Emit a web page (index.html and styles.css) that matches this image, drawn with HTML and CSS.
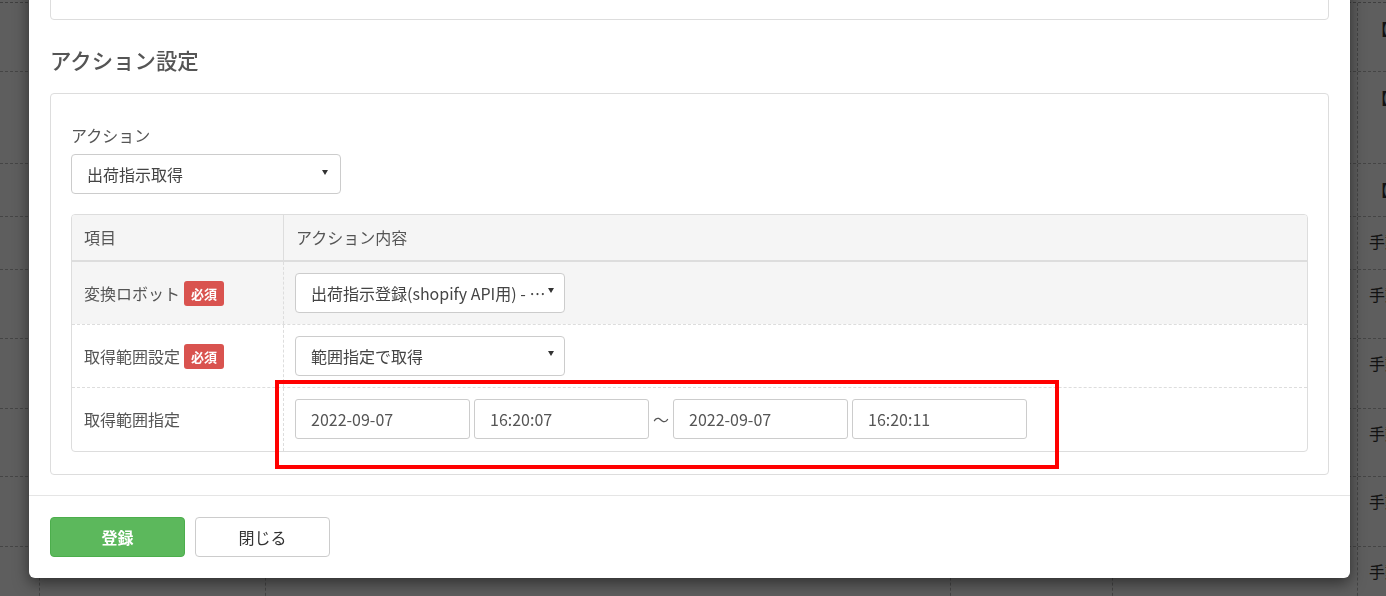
FILE: index.html
```html
<!DOCTYPE html>
<html lang="ja">
<head>
<meta charset="utf-8">
<title>アクション設定</title>
<link rel="stylesheet" href="styles.css">
</head>
<body>
<div class="page">
  <div class="bg-grid">
    <div class="bg-row r1"><span></span><span></span><span></span><span></span><span></span><span class="last">【定期】受注取込</span></div>
    <div class="bg-row r2"><span></span><span></span><span></span><span></span><span></span><span class="last">【定期】出荷指示</span></div>
    <div class="bg-row r3"><span></span><span></span><span></span><span></span><span></span><span class="last">【定期】在庫連携</span></div>
    <div class="bg-row r4"><span></span><span></span><span></span><span></span><span></span><span class="last">手動実行</span></div>
    <div class="bg-row r5"><span></span><span></span><span></span><span></span><span></span><span class="last">手動実行</span></div>
    <div class="bg-row r6"><span></span><span></span><span></span><span></span><span></span><span class="last">手動実行</span></div>
    <div class="bg-row r7"><span></span><span></span><span></span><span></span><span></span><span class="last">手動実行</span></div>
    <div class="bg-row r8"><span></span><span></span><span></span><span></span><span></span><span class="last">手動実行</span></div>
    <div class="bg-row r9"><span></span><span></span><span></span><span></span><span></span><span class="last">手動実行</span></div>
  </div>
</div>
<div class="overlay"></div>
<div class="modal">
  <div class="modal-body">
    <div class="card card-top"></div>
    <h3 class="section-title">アクション設定</h3>
    <div class="card card-action">
      <label class="field-label">アクション</label>
      <div class="select select-action">
        <span class="select-text">出荷指示取得</span>
        <span class="caret"></span>
      </div>
      <div class="table">
        <div class="tr th">
          <div class="td c1">項目</div>
          <div class="td c2">アクション内容</div>
        </div>
        <div class="tr odd">
          <div class="td c1">変換ロボット<span class="badge">必須</span></div>
          <div class="td c2">
            <div class="select select-sm">
              <span class="select-text">出荷指示登録(shopify API用) - 出荷指示取得</span>
              <span class="caret"></span>
            </div>
          </div>
        </div>
        <div class="tr">
          <div class="td c1">取得範囲設定<span class="badge">必須</span></div>
          <div class="td c2">
            <div class="select select-sm">
              <span class="select-text">範囲指定で取得</span>
              <span class="caret"></span>
            </div>
          </div>
        </div>
        <div class="tr last-row">
          <div class="td c1">取得範囲指定</div>
          <div class="td c2">
            <div class="range">
              <div class="input">2022-09-07</div>
              <div class="input">16:20:07</div>
              <span class="tilde">〜</span>
              <div class="input">2022-09-07</div>
              <div class="input">16:20:11</div>
            </div>
          </div>
        </div>
      </div>
    </div>
  </div>
  <div class="modal-footer">
    <button class="btn btn-primary">登録</button>
    <button class="btn btn-default">閉じる</button>
  </div>
  <div class="highlight"></div>
</div>
</body>
</html>
```

FILE: styles.css
```css
* { box-sizing: border-box; }
html, body { margin: 0; padding: 0; }
body {
  width: 1386px;
  height: 596px;
  overflow: hidden;
  background: #fff;
  font-family: "Noto Sans CJK JP", "Noto Sans", sans-serif;
  color: #555;
  position: relative;
}

/* background page */
.page { padding-top: 2px; }
.bg-grid { border-top: 1px dashed #aaa; }
.bg-row {
  display: grid;
  grid-template-columns: 39px 226px 685px 162px 245px 1fr;
  border-bottom: 1px dashed #bbb;
}
.bg-row span {
  border-left: 1px dashed #bbb;
  overflow: hidden;
  white-space: nowrap;
}
.bg-row span:first-child { border-left: none; }
.bg-row .last {
  padding: 14px 0 0 11px;
  font-size: 16px;
  line-height: 20px;
  color: #333;
}
.r1 { height: 69px; }
.r1 .last, .r2 .last, .r3 .last { padding-left: 14px; padding-top: 15px; }
.r2 { height: 92px; }
.r3 { height: 53px; }
.r4 { height: 53px; }
.r5 { height: 69px; }
.r6 { height: 70px; }
.r7 { height: 68px; }
.r8 { height: 70px; }
.r9 { height: 60px; }

.overlay {
  position: fixed;
  inset: 0;
  background: rgba(0, 0, 0, 0.63);
}

/* modal */
.modal {
  position: absolute;
  left: 29px;
  top: -40px;
  width: 1321px;
  background: #fff;
  border-radius: 6px;
  box-shadow: 0 5px 15px rgba(0, 0, 0, 0.5);
}
.modal-body { padding: 20px 21px 20px; }
.card {
  border: 1px solid #ddd;
  border-radius: 4px;
  background: #fff;
}
.card-top { height: 40px; }
.section-title {
  margin: 26px 0 19px;
  font-size: 21.4px;
  line-height: 28px;
  font-weight: 500;
  color: #555;
}
.card-action { padding: 31px 20px 22px; }
.field-label {
  display: block;
  font-size: 16px;
  line-height: 21px;
  margin-bottom: 8px;
  color: #555;
}
.select {
  position: relative;
  height: 40px;
  border: 1px solid #ccc;
  border-radius: 4px;
  background: #fff;
  display: flex;
  align-items: center;
  padding: 0 20px 0 15px;
  font-size: 16px;
  color: #444;
}
.select-text {
  overflow: hidden;
  white-space: nowrap;
  text-overflow: ellipsis;
}
.caret {
  position: absolute;
  right: 12px;
  top: 15px;
  width: 0; height: 0;
  border-left: 3px solid transparent;
  border-right: 3px solid transparent;
  border-top: 5px solid #333;
}
.select-action { width: 270px; margin-bottom: 20px; }
.select-sm { width: 270px; padding-right: 16px; }
.select-sm .caret { right: 10px; top: 14px; }

/* table */
.table {
  border: 1px solid #ddd;
  border-radius: 4px;
  overflow: hidden;
  font-size: 16px;
}
.tr { display: flex; border-top: 1px dashed #ddd; }
.tr.th { border-top: none; background: #f5f5f5; border-bottom: 2px solid #ddd; }
.tr.th + .tr { border-top: none; }
.tr.odd { background: #f5f5f5; }
.td { padding: 11px 12px; display: flex; align-items: center; }
.th .td { padding: 12px 12px; line-height: 21px; }
.last-row .td { padding-bottom: 12px; }
.c1 { width: 212px; flex: none; border-right: 1px dashed #ddd; color: #555; }
.th .c1 { border-right: 1px solid #ddd; }
.c2 { flex: 1; padding-left: 11px; }
.badge {
  display: inline-block;
  margin-left: 4px;
  height: 25px;
  line-height: 25px;
  padding: 0 7px;
  background: #d9534f;
  color: #fff;
  border-radius: 3px;
  font-size: 13px;
  font-weight: bold;
}
.range { display: flex; align-items: center; gap: 4px; }
.input {
  width: 175px;
  height: 40px;
  border: 1px solid #ccc;
  border-radius: 3px;
  padding: 0 15px;
  display: flex;
  align-items: center;
  font-size: 16px;
  color: #555;
  background: #fff;
}
.tilde { width: 16px; text-align: center; font-size: 16px; color: #555; }

/* footer */
.modal-footer {
  border-top: 1px solid #e5e5e5;
  padding: 21px 21px 21px;
  display: flex;
  gap: 10px;
}
.btn {
  width: 135px;
  height: 40px;
  border-radius: 4px;
  font-family: inherit;
  font-size: 16px;
  cursor: pointer;
}
.btn-primary {
  background: #5cb85c;
  border: 1px solid #4cae4c;
  color: #fff;
  font-weight: bold;
}
.btn-default {
  background: #fff;
  border: 1px solid #ccc;
  color: #333;
}

/* annotation */
.highlight {
  position: absolute;
  left: 246px;
  top: 420px;
  width: 784px;
  height: 89px;
  border: 4px solid #ff0000;
  pointer-events: none;
}
```
